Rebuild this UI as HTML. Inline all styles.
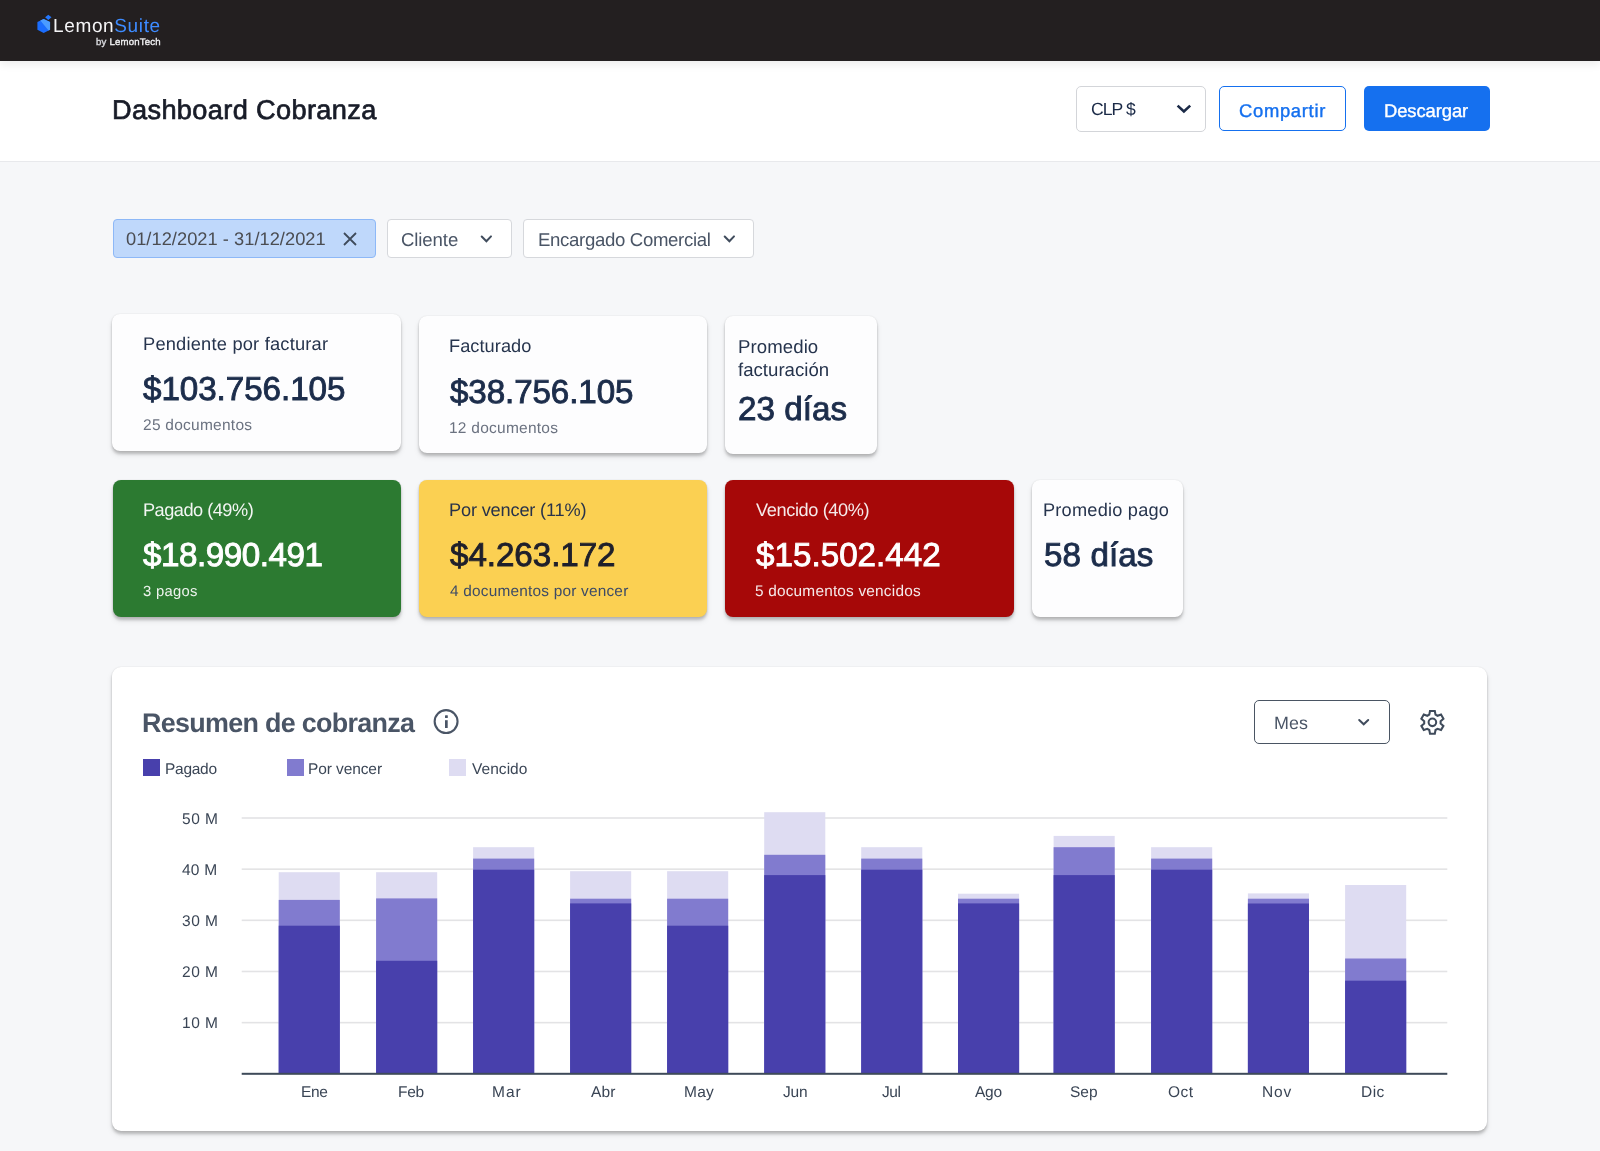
<!DOCTYPE html>
<html lang="es"><head><meta charset="utf-8"><title>Dashboard Cobranza</title>
<style>
html,body{margin:0;padding:0}
body{width:1600px;height:1151px;overflow:hidden;position:relative;background:#f6f7f9;font-family:"Liberation Sans",sans-serif}
.t{position:absolute;white-space:nowrap;text-rendering:geometricPrecision;will-change:transform}
.box{position:absolute;box-sizing:border-box}
</style></head><body>
<div style="position:absolute;left:0;top:61px;width:1600px;height:101px;background:#fff;box-sizing:border-box;border-bottom:1.5px solid #e8e9ec"></div>
<div style="position:absolute;left:0;top:0;width:1600px;height:61px;background:#231f20;box-shadow:0 4px 8px rgba(0,0,0,0.07)"></div>
<svg style="position:absolute;left:36px;top:13px" width="17" height="22" viewBox="0 0 17 22">
<polygon points="7.7,5.9 14.06,9 14.06,16.7 7.7,20.1 1.4,16.7 1.4,9" fill="#1b6dfd"/>
<polygon points="4.3,7.5 7.7,5.9 14.06,9 14.06,16.7 12.6,17.5" fill="#4b9cff"/>
<polygon points="12.3,1.7 15.5,4.3 12.3,6.9 9.1,4.3" fill="#2277ff"/>
</svg>
<div id="logo" class="t" style="left:53.34px;top:17.00px;font-size:19.00px;line-height:19.00px;font-weight:400;color:#f4f4f6;letter-spacing:0.640px;">Lemon<span style="color:#3d8bff">Suite</span></div>
<div id="bylt" class="t" style="left:95.60px;top:37.76px;font-size:9.60px;line-height:9.60px;font-weight:400;color:#f0f0f2;letter-spacing:0.205px;-webkit-text-stroke:0.35px #f0f0f2;"><span style="color:#b9bcc4">by</span> LemonTech</div>
<div id="title" class="t" style="left:111.96px;top:96.40px;font-size:27.20px;line-height:27.20px;font-weight:400;color:#181c28;letter-spacing:0.349px;-webkit-text-stroke:0.70px #181c28;">Dashboard Cobranza</div>
<div class="box" style="left:1076.2px;top:86.1px;width:130.3px;height:45.6px;border:1.5px solid #d3d5d9;border-radius:5px;background:#fff"></div>
<div id="clp" class="t" style="left:1091.00px;top:101.11px;font-size:17.60px;line-height:17.60px;font-weight:400;color:#1b2a47;letter-spacing:-0.945px;">CLP $</div>
<svg style="position:absolute;left:1175px;top:103px" width="18" height="12" viewBox="0 0 18 12"><path d="M2.6 2.6 L8.9 8.4 L15.2 2.6" fill="none" stroke="#1b2a47" stroke-width="2.6"/></svg>
<div class="box" style="left:1219.1px;top:86.2px;width:126.8px;height:44.6px;border:1.5px solid #1570ef;border-radius:5px;background:#fff"></div>
<div id="comp" class="t" style="left:1238.81px;top:101.51px;font-size:18.40px;line-height:18.40px;font-weight:400;color:#1570ef;letter-spacing:0.697px;-webkit-text-stroke:0.40px #1570ef;">Compartir</div>
<div class="box" style="left:1363.7px;top:86.2px;width:126.3px;height:44.8px;border-radius:5px;background:#1570ef"></div>
<div id="desc" class="t" style="left:1384.05px;top:101.51px;font-size:18.40px;line-height:18.40px;font-weight:400;color:#ffffff;letter-spacing:-0.079px;-webkit-text-stroke:0.40px #ffffff;">Descargar</div>
<div class="box" style="left:112.6px;top:218.7px;width:263.7px;height:39.5px;border:1px solid #8db8f7;border-radius:4px;background:#bfd8fb"></div>
<div id="date" class="t" style="left:126.43px;top:230.31px;font-size:18.30px;line-height:18.30px;font-weight:400;color:#4b4d52;letter-spacing:0.020px;">01/12/2021 - 31/12/2021</div>
<svg style="position:absolute;left:341px;top:230px" width="18" height="18" viewBox="0 0 18 18"><path d="M3 3 L15 15 M15 3 L3 15" stroke="#3f4b5b" stroke-width="1.8"/></svg>
<div class="box" style="left:386.8px;top:218.7px;width:125.3px;height:39.4px;border:1px solid #d6d8dc;border-radius:4px;background:#fff"></div>
<div id="cli" class="t" style="left:400.81px;top:230.70px;font-size:18.60px;line-height:18.60px;font-weight:400;color:#4a5566;letter-spacing:-0.105px;">Cliente</div>
<svg style="position:absolute;left:478px;top:232px" width="16" height="12" viewBox="0 0 16 12"><path d="M3.7 4.5 L8.4 9.3 L13 4.4" fill="none" stroke="#404c5d" stroke-width="2" stroke-linecap="round"/></svg>
<div class="box" style="left:523.1px;top:219px;width:231.3px;height:38.7px;border:1px solid #d6d8dc;border-radius:4px;background:#fff"></div>
<div id="enc" class="t" style="left:537.76px;top:230.70px;font-size:18.60px;line-height:18.60px;font-weight:400;color:#4a5566;letter-spacing:-0.330px;">Encargado Comercial</div>
<svg style="position:absolute;left:720.5px;top:232px" width="16" height="12" viewBox="0 0 16 12"><path d="M3.7 4.5 L8.4 9.3 L13 4.4" fill="none" stroke="#404c5d" stroke-width="2" stroke-linecap="round"/></svg>
<div class="box" style="left:112.3px;top:314.2px;width:288.8px;height:137.3px;background:#fdfdfe;border-radius:8px;box-shadow:0 3px 3px rgba(0,0,0,0.2),0 4px 6px rgba(0,0,0,0.08),0 0 1.5px rgba(0,0,0,0.12);"></div>
<div id="pend" class="t" style="left:142.57px;top:335.20px;font-size:18.30px;line-height:18.30px;font-weight:400;color:#26344d;letter-spacing:0.197px;">Pendiente por facturar</div>
<div id="v1" class="t" style="left:143.14px;top:373.00px;font-size:33.20px;line-height:33.20px;font-weight:400;color:#1c2d4b;letter-spacing:-0.057px;-webkit-text-stroke:0.90px #1c2d4b;">$103.756.105</div>
<div id="d1" class="t" style="left:142.57px;top:418.01px;font-size:15.50px;line-height:15.50px;font-weight:400;color:#6b7280;letter-spacing:0.255px;">25 documentos</div>
<div class="box" style="left:418.6px;top:315.6px;width:288.6px;height:137.8px;background:#fdfdfe;border-radius:8px;box-shadow:0 3px 3px rgba(0,0,0,0.2),0 4px 6px rgba(0,0,0,0.08),0 0 1.5px rgba(0,0,0,0.12);"></div>
<div id="fact" class="t" style="left:448.62px;top:337.30px;font-size:18.20px;line-height:18.20px;font-weight:400;color:#26344d;letter-spacing:0.056px;">Facturado</div>
<div id="v2" class="t" style="left:449.52px;top:375.60px;font-size:33.20px;line-height:33.20px;font-weight:400;color:#1c2d4b;letter-spacing:-0.108px;-webkit-text-stroke:0.90px #1c2d4b;">$38.756.105</div>
<div id="d2" class="t" style="left:448.62px;top:420.51px;font-size:15.50px;line-height:15.50px;font-weight:400;color:#6b7280;letter-spacing:0.248px;">12 documentos</div>
<div class="box" style="left:724.7px;top:315.6px;width:152.8px;height:138px;background:#fdfdfe;border-radius:8px;box-shadow:0 3px 3px rgba(0,0,0,0.2),0 4px 6px rgba(0,0,0,0.08),0 0 1.5px rgba(0,0,0,0.12);"></div>
<div id="prom" class="t" style="left:737.57px;top:337.60px;font-size:18.60px;line-height:18.60px;font-weight:400;color:#26344d;letter-spacing:0.090px;">Promedio</div>
<div id="factn" class="t" style="left:738.47px;top:361.10px;font-size:18.60px;line-height:18.60px;font-weight:400;color:#26344d;letter-spacing:0.018px;">facturación</div>
<div id="v3" class="t" style="left:737.81px;top:392.91px;font-size:33.20px;line-height:33.20px;font-weight:400;color:#1c2d4b;letter-spacing:0.045px;-webkit-text-stroke:0.90px #1c2d4b;">23 días</div>
<div class="box" style="left:112.5px;top:479.8px;width:288.6px;height:137.3px;background:#2c7a31;border-radius:8px;box-shadow:0 3px 3px rgba(0,0,0,0.2),0 4px 6px rgba(0,0,0,0.08),0 0 1.5px rgba(0,0,0,0.12);"></div>
<div id="pag" class="t" style="left:142.57px;top:501.20px;font-size:18.20px;line-height:18.20px;font-weight:400;color:#f3f6f3;letter-spacing:-0.507px;">Pagado (49%)</div>
<div id="v4" class="t" style="left:143.14px;top:539.20px;font-size:33.20px;line-height:33.20px;font-weight:400;color:#ffffff;letter-spacing:-0.450px;-webkit-text-stroke:0.90px #ffffff;">$18.990.491</div>
<div id="d4" class="t" style="left:142.57px;top:585.10px;font-size:14.80px;line-height:14.80px;font-weight:400;color:#eef3ee;letter-spacing:0.270px;">3 pagos</div>
<div class="box" style="left:418.8px;top:479.8px;width:288.5px;height:137.6px;background:#fbd052;border-radius:8px;box-shadow:0 3px 3px rgba(0,0,0,0.2),0 4px 6px rgba(0,0,0,0.08),0 0 1.5px rgba(0,0,0,0.12);"></div>
<div id="pv" class="t" style="left:448.62px;top:501.20px;font-size:18.20px;line-height:18.20px;font-weight:400;color:#28324a;letter-spacing:-0.174px;">Por vencer (11%)</div>
<div id="v5" class="t" style="left:449.52px;top:539.20px;font-size:33.20px;line-height:33.20px;font-weight:400;color:#1e1f2b;letter-spacing:-0.060px;-webkit-text-stroke:0.90px #1e1f2b;">$4.263.172</div>
<div id="d5" class="t" style="left:449.85px;top:584.10px;font-size:15.40px;line-height:15.40px;font-weight:400;color:#3d4b66;letter-spacing:0.209px;">4 documentos por vencer</div>
<div class="box" style="left:725px;top:479.8px;width:288.9px;height:137.5px;background:#a60808;border-radius:8px;box-shadow:0 3px 3px rgba(0,0,0,0.2),0 4px 6px rgba(0,0,0,0.08),0 0 1.5px rgba(0,0,0,0.12);"></div>
<div id="ven" class="t" style="left:755.52px;top:501.20px;font-size:18.20px;line-height:18.20px;font-weight:400;color:#f5eaea;letter-spacing:-0.390px;">Vencido (40%)</div>
<div id="v6" class="t" style="left:755.52px;top:539.20px;font-size:33.20px;line-height:33.20px;font-weight:400;color:#ffffff;letter-spacing:0.018px;-webkit-text-stroke:0.90px #ffffff;">$15.502.442</div>
<div id="d6" class="t" style="left:754.62px;top:584.10px;font-size:15.40px;line-height:15.40px;font-weight:400;color:#f5eaea;letter-spacing:0.194px;">5 documentos vencidos</div>
<div class="box" style="left:1031.7px;top:480.4px;width:151.8px;height:136.9px;background:#fdfdfe;border-radius:8px;box-shadow:0 3px 3px rgba(0,0,0,0.2),0 4px 6px rgba(0,0,0,0.08),0 0 1.5px rgba(0,0,0,0.12);"></div>
<div id="pp" class="t" style="left:1043.05px;top:500.91px;font-size:18.20px;line-height:18.20px;font-weight:400;color:#26344d;letter-spacing:0.218px;">Promedio pago</div>
<div id="v7" class="t" style="left:1043.81px;top:538.91px;font-size:33.20px;line-height:33.20px;font-weight:400;color:#1c2d4b;letter-spacing:0.090px;-webkit-text-stroke:0.90px #1c2d4b;">58 días</div>
<div class="box" style="left:111.8px;top:667px;width:1375.6px;height:464px;background:#fff;border-radius:9px;box-shadow:0 3px 3px rgba(0,0,0,0.2),0 4px 6px rgba(0,0,0,0.08),0 0 1.5px rgba(0,0,0,0.12)"></div>
<div id="res" class="t" style="left:141.91px;top:710.21px;font-size:26.90px;line-height:26.90px;font-weight:700;color:#4a5566;letter-spacing:-0.690px;">Resumen de cobranza</div>
<svg style="position:absolute;left:433px;top:708px" width="27" height="27" viewBox="0 0 27 27"><circle cx="13.1" cy="13.6" r="11.45" fill="none" stroke="#4a5566" stroke-width="2.1"/><rect x="12" y="7.2" width="2.8" height="2.8" rx="0.5" fill="#4a5566"/><rect x="12" y="12.2" width="2.7" height="7.8" fill="#4a5566"/></svg>
<div class="box" style="left:1254.1px;top:700.1px;width:135.6px;height:44.3px;border:1.5px solid #4a5563;border-radius:5px;background:#fff"></div>
<div id="mes" class="t" style="left:1273.62px;top:715.21px;font-size:17.90px;line-height:17.90px;font-weight:400;color:#4a5566;letter-spacing:0.135px;">Mes</div>
<svg style="position:absolute;left:1356px;top:716px" width="16" height="12" viewBox="0 0 16 12"><path d="M3.2 4 L7.7 8.3 L12.2 4" fill="none" stroke="#404c5d" stroke-width="2" stroke-linecap="round"/></svg>
<svg style="position:absolute;left:1416px;top:706px" width="32" height="32" viewBox="0 0 32 32"><path fill="none" stroke="#3f4b5b" stroke-width="2.05" stroke-linejoin="miter" d="M19.51 8.60 L18.81 4.95 L13.99 4.95 L13.29 8.60 L11.29 9.76 L7.78 8.54 L5.37 12.72 L8.18 15.14 L8.18 17.46 L5.37 19.88 L7.78 24.06 L11.29 22.84 L13.29 24.00 L13.99 27.65 L18.81 27.65 L19.51 24.00 L21.51 22.84 L25.02 24.06 L27.43 19.88 L24.62 17.46 L24.62 15.14 L27.43 12.72 L25.02 8.54 L21.51 9.76Z"/><circle cx="16.4" cy="16.3" r="3.8" fill="none" stroke="#3f4b5b" stroke-width="2.05"/></svg>
<div class="box" style="left:142.5px;top:758.75px;width:17.3px;height:17.0px;background:#4840ac"></div>
<div id="leg0" class="t" style="left:164.97px;top:761.60px;font-size:15.50px;line-height:15.50px;font-weight:400;color:#3b4656;letter-spacing:-0.270px;">Pagado</div>
<div class="box" style="left:286.5px;top:758.75px;width:17.3px;height:17.0px;background:#817bcf"></div>
<div id="leg1" class="t" style="left:308.05px;top:761.60px;font-size:15.50px;line-height:15.50px;font-weight:400;color:#3b4656;letter-spacing:-0.100px;">Por vencer</div>
<div class="box" style="left:449px;top:758.75px;width:17.3px;height:17.0px;background:#dedcf2"></div>
<div id="leg2" class="t" style="left:471.85px;top:761.60px;font-size:15.50px;line-height:15.50px;font-weight:400;color:#3b4656;letter-spacing:0.038px;">Vencido</div>
<div id="y0" class="t" style="left:181.57px;top:1016.36px;font-size:15.50px;line-height:15.50px;font-weight:400;color:#3a4555;letter-spacing:0.510px;">10 M</div>
<div id="y1" class="t" style="left:181.57px;top:965.19px;font-size:15.50px;line-height:15.50px;font-weight:400;color:#3a4555;letter-spacing:0.510px;">20 M</div>
<div id="y2" class="t" style="left:181.57px;top:914.04px;font-size:15.50px;line-height:15.50px;font-weight:400;color:#3a4555;letter-spacing:0.510px;">30 M</div>
<div id="y3" class="t" style="left:182.47px;top:862.86px;font-size:15.50px;line-height:15.50px;font-weight:400;color:#3a4555;letter-spacing:0.210px;">40 M</div>
<div id="y4" class="t" style="left:181.57px;top:811.71px;font-size:15.50px;line-height:15.50px;font-weight:400;color:#3a4555;letter-spacing:0.510px;">50 M</div>
<div id="m0" class="t" style="left:300.81px;top:1085.21px;font-size:15.50px;line-height:15.50px;font-weight:400;color:#3a4555;letter-spacing:-0.360px;">Ene</div>
<div id="m1" class="t" style="left:398.19px;top:1085.21px;font-size:15.50px;line-height:15.50px;font-weight:400;color:#3a4555;letter-spacing:-0.315px;">Feb</div>
<div id="m2" class="t" style="left:492.24px;top:1085.21px;font-size:15.50px;line-height:15.50px;font-weight:400;color:#3a4555;letter-spacing:1.035px;">Mar</div>
<div id="m3" class="t" style="left:591.09px;top:1085.21px;font-size:15.50px;line-height:15.50px;font-weight:400;color:#3a4555;letter-spacing:0.135px;">Abr</div>
<div id="m4" class="t" style="left:684.24px;top:1085.21px;font-size:15.50px;line-height:15.50px;font-weight:400;color:#3a4555;letter-spacing:0.225px;">May</div>
<div id="m5" class="t" style="left:783.28px;top:1085.21px;font-size:15.50px;line-height:15.50px;font-weight:400;color:#3a4555;letter-spacing:-0.180px;">Jun</div>
<div id="m6" class="t" style="left:881.90px;top:1085.21px;font-size:15.50px;line-height:15.50px;font-weight:400;color:#3a4555;letter-spacing:-0.450px;">Jul</div>
<div id="m7" class="t" style="left:974.52px;top:1085.21px;font-size:15.50px;line-height:15.50px;font-weight:400;color:#3a4555;letter-spacing:-0.270px;">Ago</div>
<div id="m8" class="t" style="left:1070.38px;top:1085.21px;font-size:15.50px;line-height:15.50px;font-weight:400;color:#3a4555;letter-spacing:0.000px;">Sep</div>
<div id="m9" class="t" style="left:1167.62px;top:1085.21px;font-size:15.50px;line-height:15.50px;font-weight:400;color:#3a4555;letter-spacing:0.450px;">Oct</div>
<div id="m10" class="t" style="left:1262.38px;top:1085.21px;font-size:15.50px;line-height:15.50px;font-weight:400;color:#3a4555;letter-spacing:0.900px;">Nov</div>
<div id="m11" class="t" style="left:1361.00px;top:1085.21px;font-size:15.50px;line-height:15.50px;font-weight:400;color:#3a4555;letter-spacing:0.450px;">Dic</div>
<svg style="position:absolute;left:0;top:0" width="1600" height="1151" viewBox="0 0 1600 1151">
<rect x="241.7" y="1021.84" width="1205.6" height="1.6" fill="#e3e3e5"/>
<rect x="241.7" y="970.68" width="1205.6" height="1.6" fill="#e3e3e5"/>
<rect x="241.7" y="919.52" width="1205.6" height="1.6" fill="#e3e3e5"/>
<rect x="241.7" y="868.36" width="1205.6" height="1.6" fill="#e3e3e5"/>
<rect x="241.7" y="817.20" width="1205.6" height="1.6" fill="#e3e3e5"/>
<rect x="278.70" y="872.2" width="61.1" height="201.60" fill="#dedcf2"/>
<rect x="278.70" y="899.9" width="61.1" height="173.90" fill="#817bcf"/>
<rect x="278.70" y="925.7" width="61.1" height="148.10" fill="#4840ac"/>
<rect x="376.10" y="872.2" width="61.1" height="201.60" fill="#dedcf2"/>
<rect x="376.10" y="898.4" width="61.1" height="175.40" fill="#817bcf"/>
<rect x="376.10" y="960.8" width="61.1" height="113.00" fill="#4840ac"/>
<rect x="473.10" y="847.2" width="61.1" height="226.60" fill="#dedcf2"/>
<rect x="473.10" y="858.6" width="61.1" height="215.20" fill="#817bcf"/>
<rect x="473.10" y="869.7" width="61.1" height="204.10" fill="#4840ac"/>
<rect x="570.10" y="871.2" width="61.1" height="202.60" fill="#dedcf2"/>
<rect x="570.10" y="898.7" width="61.1" height="175.10" fill="#817bcf"/>
<rect x="570.10" y="903.4" width="61.1" height="170.40" fill="#4840ac"/>
<rect x="667.10" y="871.2" width="61.1" height="202.60" fill="#dedcf2"/>
<rect x="667.10" y="898.7" width="61.1" height="175.10" fill="#817bcf"/>
<rect x="667.10" y="925.7" width="61.1" height="148.10" fill="#4840ac"/>
<rect x="764.20" y="812.2" width="61.1" height="261.60" fill="#dedcf2"/>
<rect x="764.20" y="854.8" width="61.1" height="219.00" fill="#817bcf"/>
<rect x="764.20" y="875.1" width="61.1" height="198.70" fill="#4840ac"/>
<rect x="861.20" y="847.2" width="61.1" height="226.60" fill="#dedcf2"/>
<rect x="861.20" y="858.6" width="61.1" height="215.20" fill="#817bcf"/>
<rect x="861.20" y="869.7" width="61.1" height="204.10" fill="#4840ac"/>
<rect x="958.00" y="893.7" width="61.1" height="180.10" fill="#dedcf2"/>
<rect x="958.00" y="898.7" width="61.1" height="175.10" fill="#817bcf"/>
<rect x="958.00" y="903.4" width="61.1" height="170.40" fill="#4840ac"/>
<rect x="1053.60" y="835.9" width="61.1" height="237.90" fill="#dedcf2"/>
<rect x="1053.60" y="847.2" width="61.1" height="226.60" fill="#817bcf"/>
<rect x="1053.60" y="875.1" width="61.1" height="198.70" fill="#4840ac"/>
<rect x="1151.10" y="847.2" width="61.1" height="226.60" fill="#dedcf2"/>
<rect x="1151.10" y="858.6" width="61.1" height="215.20" fill="#817bcf"/>
<rect x="1151.10" y="869.7" width="61.1" height="204.10" fill="#4840ac"/>
<rect x="1247.90" y="893.4" width="61.1" height="180.40" fill="#dedcf2"/>
<rect x="1247.90" y="898.7" width="61.1" height="175.10" fill="#817bcf"/>
<rect x="1247.90" y="903.5" width="61.1" height="170.30" fill="#4840ac"/>
<rect x="1345.10" y="885.0" width="61.1" height="188.80" fill="#dedcf2"/>
<rect x="1345.10" y="958.5" width="61.1" height="115.30" fill="#817bcf"/>
<rect x="1345.10" y="980.7" width="61.1" height="93.10" fill="#4840ac"/>
<rect x="241.7" y="1072.80" width="1205.6" height="2" fill="#3e4a59"/>
</svg>
</body></html>
